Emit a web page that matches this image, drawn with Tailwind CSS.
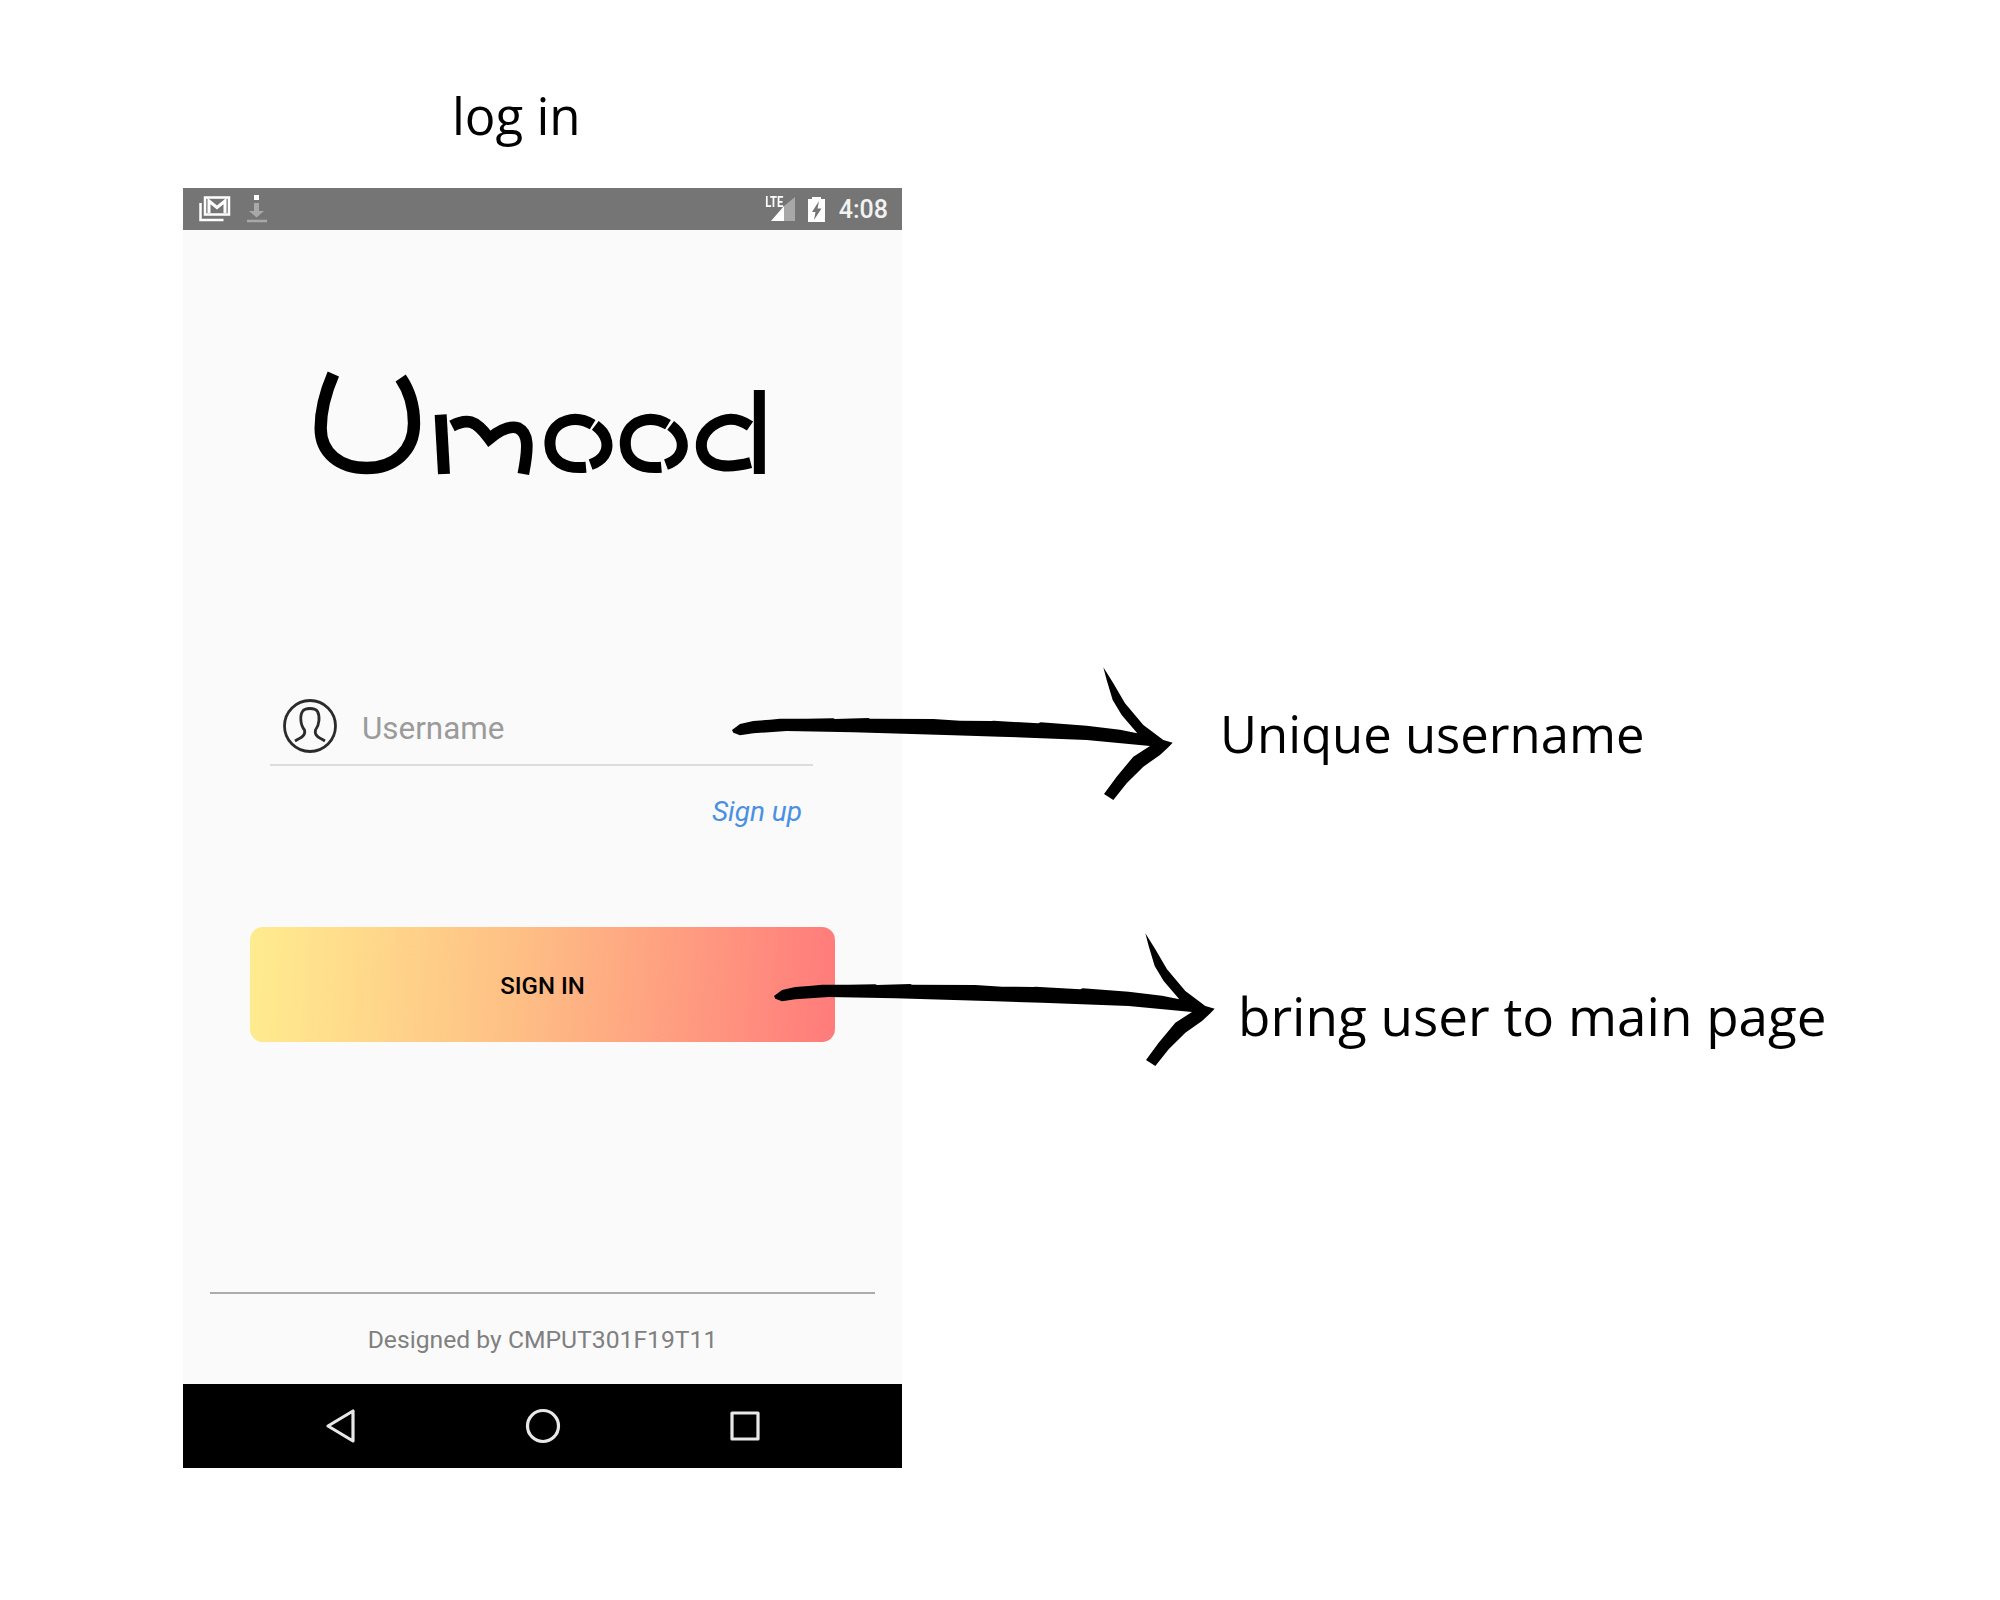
<!DOCTYPE html>
<html lang="en">
<head>
  <meta charset="UTF-8" />
  <title>log in</title>
  <script src="https://cdn.jsdelivr.net/npm/@tailwindcss/browser@4"></script>
</head>
<body class="bg-white">
  <div class="relative w-[2000px] h-[1600px] bg-white overflow-hidden font-['Roboto',sans-serif]">

    <!-- Title -->
    <h1 class="pt-[77px] pl-[452px] h-[188px] text-[51px] leading-[76px] text-black font-['Open_Sans',sans-serif]">log in</h1>

    <!-- Phone -->
    <div class="ml-[183px] w-[719px] h-[1280px] flex flex-col bg-[#fafafa]">

      <!-- Status bar -->
      <div class="h-[42px] shrink-0 bg-[#757575] flex items-center pl-[16px] pr-[14px] text-white">
        <svg width="32" height="26" viewBox="0 0 32 26" fill="none" stroke="#fff">
          <path d="M6 1.500h24v17H6z" stroke-width="2.500" />
          <path d="M10 17V5l8 6.500L26 5v12" stroke-width="3" />
          <path d="M1.500 7v17h23" stroke-width="2.500" />
        </svg>
        <svg class="ml-[16px]" width="20" height="28" viewBox="0 0 20 28" fill="none">
          <path d="M7 0h5v5H7z" fill="#ffffff" />
          <path d="M7 8h5v8h5l-7.500 6.500L2 16h5z" fill="#a8a8a8" />
          <path d="M0 26h20" stroke="#a8a8a8" stroke-width="2.500" />
        </svg>
        <div class="flex-1"></div>
        <div class="relative w-[24px] h-[24px]">
          <span class="absolute left-[-8px] top-[-2px] text-[14px] leading-[14px] font-bold scale-x-[.8]">LTE</span>
          <svg width="24" height="24" viewBox="0 0 24 24">
            <path d="M24 0v24H13V9z" fill="#a8a8a8" />
            <path d="M13 9v15H0z" fill="#fff" />
          </svg>
        </div>
        <svg class="ml-[13px]" width="17" height="25" viewBox="0 0 17 25">
          <path d="M4 0h9v2h4v23H0V2h4z" fill="#fff" />
          <path d="M11 4 4 15h3.500l-1.500 8L13.500 11.500H9.500z" fill="#757575" />
        </svg>
        <span class="ml-[14px] text-[25px] leading-none font-medium text-[#f2f2f2]">4:08</span>
      </div>

      <!-- Screen -->
      <main class="flex-1 flex flex-col">
        <!-- Logo -->
        <svg role="img" aria-label="Umood" class="mt-[120px] ml-[107px] shrink-0 blur-[0.6px]" width="500" height="150" viewBox="0 0 1500 450" fill="none" stroke="#000">
          <path stroke-width="37" d="M130 72C105 130 92 180 92 235C92 310 150 354 230 354C310 354 372 305 372 220C372 170 360 125 332 84" />
          <path stroke-width="36" d="M452 194L462 372" />
          <path stroke-width="35" d="M486 228C530 205 556 208 598 266C630 240 660 226 684 234C716 250 716 290 700 372" />
          <g stroke-width="33">
            <path d="M908 224C875 204 850 206 830 212C792 224 778 255 780 285C782 330 820 358 888 352" />
            <path d="M902 344C940 330 955 305 950 275C946 252 934 240 916 226" />
            <path d="M1134 224C1101 204 1076 206 1056 212C1018 224 1004 255 1006 285C1008 330 1046 358 1114 352" />
            <path d="M1128 344C1166 330 1181 305 1176 275C1172 252 1160 240 1142 226" />
            <path d="M1380 228C1345 204 1320 204 1298 212C1252 228 1232 260 1234 290C1237 335 1282 364 1382 338" />
            <path d="M1408 120V372" />
          </g>
        </svg>

        <!-- Username field -->
        <div class="mt-[195px] ml-[87px] w-[543px] h-[71px] shrink-0 flex items-center pl-[12px] pb-[8px] border-b-2 border-[#dcdcdc]">
          <svg width="56" height="56" viewBox="0 0 56 56" fill="none" stroke="#2b2b2b" stroke-width="2.800">
            <circle cx="28" cy="28" r="25.500" />
            <path d="M13 43C19 39.500 24 37.500 22.500 32C18 27 18 17 20.500 13.500C23 9.500 33 9.500 35.500 13.500C38 18 37.500 27 33.500 32C32 37.500 37 39.500 43 43" />
          </svg>
          <span class="ml-[24px] mt-[6px] text-[31.400px] leading-none text-[#9b9b9b]">Username</span>
        </div>

        <a class="mt-[28px] mr-[100px] self-end text-[28px] leading-[36px] italic text-[#4a90e2]">Sign up</a>

        <!-- Sign in -->
        <button class="mt-[97px] ml-[67px] w-[585px] h-[115px] shrink-0 pt-[2px] rounded-[13px] bg-[linear-gradient(94deg,#ffec8f_0%,#fec085_45%,#ff7b7b_100%)] text-[24px] font-medium text-black">SIGN IN</button>

        <!-- Footer -->
        <div class="mt-[250px] mx-[27px] h-[2px] bg-[#ababab]"></div>
        <p class="mt-[31px] text-center text-[24.700px] leading-[30px] text-[#808080]">Designed by CMPUT301F19T11</p>
      </main>

      <!-- Nav bar -->
      <div class="h-[84px] shrink-0 bg-black flex items-center justify-center">
        <div class="w-[436px] flex items-center justify-between">
          <svg width="32" height="36" viewBox="0 0 32 36" fill="none" stroke="#e8e8e8" stroke-width="3.200" stroke-linejoin="round">
            <path d="M28 3v30L3 18z" />
          </svg>
          <svg width="36" height="36" viewBox="0 0 36 36" fill="none" stroke="#e8e8e8" stroke-width="3.200">
            <circle cx="18" cy="18" r="15.500" />
          </svg>
          <svg width="32" height="32" viewBox="0 0 32 32" fill="none" stroke="#e8e8e8" stroke-width="3.200" stroke-linejoin="round">
            <path d="M3 3h26v26H3z" />
          </svg>
        </div>
      </div>
    </div>

    <!-- Annotations -->
    <svg class="absolute left-[720px] top-[650px]" width="480" height="160" viewBox="0 0 1440 480">
      <path fill="#000" d="M36 240L60 222L100 213L150 209L180 206L260 206L340 205L345 207L445 204L450 206L640 207L720 212L815 213L820 212L955 220L962 217L1100 227L1200 239L1252 250L1205 195L1178 150L1160 90L1150 52L1180 100L1215 160L1270 225L1330 270L1358 278L1345 292L1320 315L1270 350L1220 400L1180 450L1152 432L1190 380L1240 320L1290 288L1100 270L840 260L700 256L400 247L200 243L100 250L60 256L40 248Z" />
    </svg>
    <svg class="absolute left-[762px] top-[916px]" width="480" height="160" viewBox="0 0 1440 480">
      <path fill="#000" d="M36 240L60 222L100 213L150 209L180 206L260 206L340 205L345 207L445 204L450 206L640 207L720 212L815 213L820 212L955 220L962 217L1100 227L1200 239L1252 250L1205 195L1178 150L1160 90L1150 52L1180 100L1215 160L1270 225L1330 270L1358 278L1345 292L1320 315L1270 350L1220 400L1180 450L1152 432L1190 380L1240 320L1290 288L1100 270L840 260L700 256L400 247L200 243L100 250L60 256L40 248Z" />
    </svg>
    <p class="absolute left-[1220px] top-[696px] text-[50.800px] leading-[76px] text-black font-['Open_Sans',sans-serif] whitespace-nowrap">Unique username</p>
    <p class="absolute left-[1238px] top-[978px] text-[53px] leading-[76px] text-black font-['Open_Sans',sans-serif] whitespace-nowrap">bring user to main page</p>
  </div>
</body>
</html>
